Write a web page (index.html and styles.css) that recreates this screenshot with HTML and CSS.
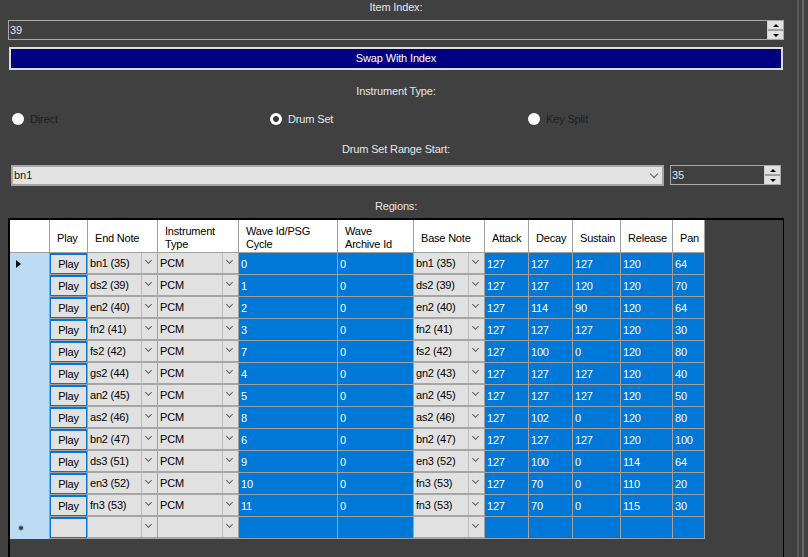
FILE: index.html
```html
<!DOCTYPE html>
<html>
<head>
<meta charset="utf-8">
<link rel="stylesheet" href="styles.css">
</head>
<body>
<div class="page">
  <main class="main">
    <div class="label">Item Index:</div>
    <div class="numeric wide">
      <span class="num-text">39</span>
      <span class="spin"><span class="sb up"></span><span class="sb down"></span></span>
    </div>
    <button class="swap">Swap With Index</button>
    <div class="label l2">Instrument Type:</div>
    <div class="radios">
      <label class="radio dim"><span class="dot"></span>Direct</label>
      <label class="radio"><span class="dot checked"></span>Drum Set</label>
      <label class="radio dim"><span class="dot"></span>Key Split</label>
    </div>
    <div class="label l3">Drum Set Range Start:</div>
    <div class="range-row">
      <div class="combo"><span class="combo-t">bn1</span><span class="combo-d"></span></div>
      <div class="numeric small">
        <span class="num-text">35</span>
        <span class="spin"><span class="sb up"></span><span class="sb down"></span></span>
      </div>
    </div>
    <div class="label l4">Regions:</div>
    <div class="panel">
      <div class="grid">
        <div class="row">
          <div class="c rh hdr"></div><div class="c h">Play</div><div class="c h">End Note</div><div class="c h">Instrument<br>Type</div><div class="c h">Wave Id/PSG<br>Cycle</div><div class="c h">Wave<br>Archive Id</div><div class="c h">Base Note</div><div class="c h">Attack</div><div class="c h">Decay</div><div class="c h">Sustain</div><div class="c h">Release</div><div class="c h">Pan</div>
        </div>
        <div class="row">
          <div class="c rh"><span class="cur"></span></div><div class="c p"><span class="btn">Play</span></div><div class="c cb"><span class="cb-t">bn1 (35)</span><span class="cb-d"></span></div><div class="c cb"><span class="cb-t">PCM</span><span class="cb-d"></span></div><div class="c v">0</div><div class="c v">0</div><div class="c cb"><span class="cb-t">bn1 (35)</span><span class="cb-d"></span></div><div class="c v">127</div><div class="c v">127</div><div class="c v">127</div><div class="c v">120</div><div class="c v">64</div>
        </div>
        <div class="row">
          <div class="c rh"></div><div class="c p"><span class="btn">Play</span></div><div class="c cb"><span class="cb-t">ds2 (39)</span><span class="cb-d"></span></div><div class="c cb"><span class="cb-t">PCM</span><span class="cb-d"></span></div><div class="c v">1</div><div class="c v">0</div><div class="c cb"><span class="cb-t">ds2 (39)</span><span class="cb-d"></span></div><div class="c v">127</div><div class="c v">127</div><div class="c v">120</div><div class="c v">120</div><div class="c v">70</div>
        </div>
        <div class="row">
          <div class="c rh"></div><div class="c p"><span class="btn">Play</span></div><div class="c cb"><span class="cb-t">en2 (40)</span><span class="cb-d"></span></div><div class="c cb"><span class="cb-t">PCM</span><span class="cb-d"></span></div><div class="c v">2</div><div class="c v">0</div><div class="c cb"><span class="cb-t">en2 (40)</span><span class="cb-d"></span></div><div class="c v">127</div><div class="c v">114</div><div class="c v">90</div><div class="c v">120</div><div class="c v">64</div>
        </div>
        <div class="row">
          <div class="c rh"></div><div class="c p"><span class="btn">Play</span></div><div class="c cb"><span class="cb-t">fn2 (41)</span><span class="cb-d"></span></div><div class="c cb"><span class="cb-t">PCM</span><span class="cb-d"></span></div><div class="c v">3</div><div class="c v">0</div><div class="c cb"><span class="cb-t">fn2 (41)</span><span class="cb-d"></span></div><div class="c v">127</div><div class="c v">127</div><div class="c v">127</div><div class="c v">120</div><div class="c v">30</div>
        </div>
        <div class="row">
          <div class="c rh"></div><div class="c p"><span class="btn">Play</span></div><div class="c cb"><span class="cb-t">fs2 (42)</span><span class="cb-d"></span></div><div class="c cb"><span class="cb-t">PCM</span><span class="cb-d"></span></div><div class="c v">7</div><div class="c v">0</div><div class="c cb"><span class="cb-t">fs2 (42)</span><span class="cb-d"></span></div><div class="c v">127</div><div class="c v">100</div><div class="c v">0</div><div class="c v">120</div><div class="c v">80</div>
        </div>
        <div class="row">
          <div class="c rh"></div><div class="c p"><span class="btn">Play</span></div><div class="c cb"><span class="cb-t">gs2 (44)</span><span class="cb-d"></span></div><div class="c cb"><span class="cb-t">PCM</span><span class="cb-d"></span></div><div class="c v">4</div><div class="c v">0</div><div class="c cb"><span class="cb-t">gn2 (43)</span><span class="cb-d"></span></div><div class="c v">127</div><div class="c v">127</div><div class="c v">127</div><div class="c v">120</div><div class="c v">40</div>
        </div>
        <div class="row">
          <div class="c rh"></div><div class="c p"><span class="btn">Play</span></div><div class="c cb"><span class="cb-t">an2 (45)</span><span class="cb-d"></span></div><div class="c cb"><span class="cb-t">PCM</span><span class="cb-d"></span></div><div class="c v">5</div><div class="c v">0</div><div class="c cb"><span class="cb-t">an2 (45)</span><span class="cb-d"></span></div><div class="c v">127</div><div class="c v">127</div><div class="c v">127</div><div class="c v">120</div><div class="c v">50</div>
        </div>
        <div class="row">
          <div class="c rh"></div><div class="c p"><span class="btn">Play</span></div><div class="c cb"><span class="cb-t">as2 (46)</span><span class="cb-d"></span></div><div class="c cb"><span class="cb-t">PCM</span><span class="cb-d"></span></div><div class="c v">8</div><div class="c v">0</div><div class="c cb"><span class="cb-t">as2 (46)</span><span class="cb-d"></span></div><div class="c v">127</div><div class="c v">102</div><div class="c v">0</div><div class="c v">120</div><div class="c v">80</div>
        </div>
        <div class="row">
          <div class="c rh"></div><div class="c p"><span class="btn">Play</span></div><div class="c cb"><span class="cb-t">bn2 (47)</span><span class="cb-d"></span></div><div class="c cb"><span class="cb-t">PCM</span><span class="cb-d"></span></div><div class="c v">6</div><div class="c v">0</div><div class="c cb"><span class="cb-t">bn2 (47)</span><span class="cb-d"></span></div><div class="c v">127</div><div class="c v">127</div><div class="c v">127</div><div class="c v">120</div><div class="c v">100</div>
        </div>
        <div class="row">
          <div class="c rh"></div><div class="c p"><span class="btn">Play</span></div><div class="c cb"><span class="cb-t">ds3 (51)</span><span class="cb-d"></span></div><div class="c cb"><span class="cb-t">PCM</span><span class="cb-d"></span></div><div class="c v">9</div><div class="c v">0</div><div class="c cb"><span class="cb-t">en3 (52)</span><span class="cb-d"></span></div><div class="c v">127</div><div class="c v">100</div><div class="c v">0</div><div class="c v">114</div><div class="c v">64</div>
        </div>
        <div class="row">
          <div class="c rh"></div><div class="c p"><span class="btn">Play</span></div><div class="c cb"><span class="cb-t">en3 (52)</span><span class="cb-d"></span></div><div class="c cb"><span class="cb-t">PCM</span><span class="cb-d"></span></div><div class="c v">10</div><div class="c v">0</div><div class="c cb"><span class="cb-t">fn3 (53)</span><span class="cb-d"></span></div><div class="c v">127</div><div class="c v">70</div><div class="c v">0</div><div class="c v">110</div><div class="c v">20</div>
        </div>
        <div class="row">
          <div class="c rh"></div><div class="c p"><span class="btn">Play</span></div><div class="c cb"><span class="cb-t">fn3 (53)</span><span class="cb-d"></span></div><div class="c cb"><span class="cb-t">PCM</span><span class="cb-d"></span></div><div class="c v">11</div><div class="c v">0</div><div class="c cb"><span class="cb-t">fn3 (53)</span><span class="cb-d"></span></div><div class="c v">127</div><div class="c v">70</div><div class="c v">0</div><div class="c v">115</div><div class="c v">30</div>
        </div>
        <div class="row">
          <div class="c rh"><svg class="star" width="6" height="6" viewBox="0 0 6 6"><path d="M3 0.5V5.5M0.8 1.7L5.2 4.3M5.2 1.7L0.8 4.3" stroke="#333" stroke-width="1.2"/></svg></div><div class="c p"><span class="btn"></span></div><div class="c cb"><span class="cb-t"></span><span class="cb-d"></span></div><div class="c cb"><span class="cb-t"></span><span class="cb-d"></span></div><div class="c v"></div><div class="c v"></div><div class="c cb"><span class="cb-t"></span><span class="cb-d"></span></div><div class="c v"></div><div class="c v"></div><div class="c v"></div><div class="c v"></div><div class="c v"></div>
        </div>
      </div>
    </div>
  </main>
  <div class="edge"><span class="ln a"></span><span class="ln b"></span></div>
</div>
</body>
</html>
```

FILE: styles.css
```css
* { box-sizing: border-box; }
html, body { margin: 0; padding: 0; }
body {
  background: #404040;
  font-family: "Liberation Sans", Arial, sans-serif;
  font-size: 11px;
  color: #e6e6e6;
  overflow: hidden;
}
.page { display: flex; height: 557px; overflow: hidden; }
.main {
  width: 797px;
  padding-left: 8px;
  display: flex;
  flex-direction: column;
  flex: none;
}
.label {
  width: 776px;
  height: 16px;
  line-height: 15px;
  text-align: center;
  letter-spacing: -0.15px;
  flex: none;
}
.l2 { margin-top: 14px; }
.l3 { margin-top: 15px; }
.l4 { margin-top: 13px; }

.numeric {
  display: flex;
  height: 20px;
  border: 1px solid #a8a8a8;
  background: #404040;
  flex: none;
}
.numeric.wide { width: 776px; margin-top: 4px; }
.numeric.small { width: 111px; }
.num-text { flex: 1; padding-left: 1px; line-height: 18px; color: #dfe6ee; }
.spin {
  width: 16px;
  display: flex;
  flex-direction: column;
  background: #e3e3e3;
  border-left: 1px solid #d0d0d0;
}
.sb { flex: 1; display: flex; align-items: center; justify-content: center; background: #e1e1e1; }
.sb.up { border-bottom: 1px solid #a0a0a0; }
.sb.down { border-top: 1px solid #a0a0a0; }
.sb.up::after {
  content: ""; width: 0; height: 0;
  border-left: 3px solid transparent; border-right: 3px solid transparent;
  border-bottom: 3px solid #000;
}
.sb.down::after {
  content: ""; width: 0; height: 0;
  border-left: 3px solid transparent; border-right: 3px solid transparent;
  border-top: 3px solid #000;
}

.swap {
  margin: 7px 0 0 1px;
  width: 774px;
  height: 23px;
  border: 2px solid #dcdcdc;
  background: #000080;
  color: #fff;
  font: inherit;
  letter-spacing: -0.15px;
  padding: 0;
  line-height: 19px;
  flex: none;
}

.radios {
  margin-top: 11px;
  height: 16px;
  padding-left: 4px;
  display: grid;
  grid-template-columns: 258px 258px 258px;
  flex: none;
}
.radio { display: flex; align-items: center; gap: 6px; color: #e6e6e6; letter-spacing: -0.15px; }
.radio.dim { color: #1e1e1e; }
.dot { width: 12px; height: 12px; border-radius: 50%; background: #fff; flex: none; }
.dot.checked { background: radial-gradient(circle, #383838 0 2.6px, #fff 3.2px); }

.range-row {
  margin-top: 7px;
  padding-left: 3px;
  display: flex;
  gap: 6px;
  height: 21px;
  flex: none;
}
.combo {
  width: 653px;
  height: 21px;
  background: #e3e3e3;
  border: 2px solid #a5a5a5;
  display: flex;
  color: #1a1a1a;
}
.combo-t { flex: 1; padding-left: 1px; line-height: 17px; }
.combo-d { width: 20px; position: relative; }
.combo-d::after {
  content: ""; position: absolute; left: 9px; top: 4px;
  width: 5px; height: 5px;
  border-right: 1px solid #606060; border-bottom: 1px solid #606060;
  transform: rotate(45deg);
}

.panel {
  margin-top: 3px;
  width: 776px;
  height: 345px;
  border-top: 2px solid #000;
  border-left: 2px solid #000;
  border-right: 1px solid #000;
  flex: none;
}
.grid {
  display: grid;
  grid-template-columns: 40px 38px 70px 81px 99px 76px 71px 44px 44px 48px 52px 32px;
  grid-template-rows: 33px;
  grid-auto-rows: 22px;
  width: 695px;
  color: #000;
  letter-spacing: -0.2px;
}
.row { display: contents; }
.c {
  border-right: 1px solid #a0a0a0;
  border-bottom: 1px solid #a0a0a0;
  overflow: hidden;
  white-space: nowrap;
}
.h {
  background: #fff;
  display: flex;
  align-items: center;
  padding: 4px 0 0 7px;
  line-height: 13px;
  white-space: normal;
}
.rh {
  background: #bcdcf4;
  border-bottom: none;
  display: flex;
  align-items: center;
  padding-left: 6px;
}
.rh.hdr { background: #fff; border-bottom: 1px solid #a0a0a0; }
.cur {
  width: 0; height: 0;
  border-left: 5px solid #111;
  border-top: 4px solid transparent;
  border-bottom: 4px solid transparent;
}
.star { margin-left: 2px; }
.v { background: #0078d7; color: #fff; padding-left: 2px; line-height: 22px; }
.p { background: #0078d7; padding: 2px 1px 1px 1px; }
.btn {
  display: block;
  height: 100%;
  background: #e1e1e1;
  text-align: center;
  line-height: 18px;
  color: #000;
}
.cb { background: #e1e1e1; display: flex; border-bottom: 2px solid #a6a6a6; }
.cb-t { flex: 1; padding-left: 2px; line-height: 21px; }
.cb-d { width: 16px; border-left: 1px solid #bdbdbd; position: relative; flex: none; }
.cb-d::after {
  content: ""; position: absolute; left: 4px; top: 5px;
  width: 4px; height: 4px;
  border-right: 1px solid #606060; border-bottom: 1px solid #606060;
  transform: rotate(45deg);
}

.edge { display: flex; flex: none; width: 11px; gap: 3px; }
.ln { width: 2px; height: 100%; }
.ln.a { background: #5a5a5a; }
.ln.b { background: #676767; }
```
